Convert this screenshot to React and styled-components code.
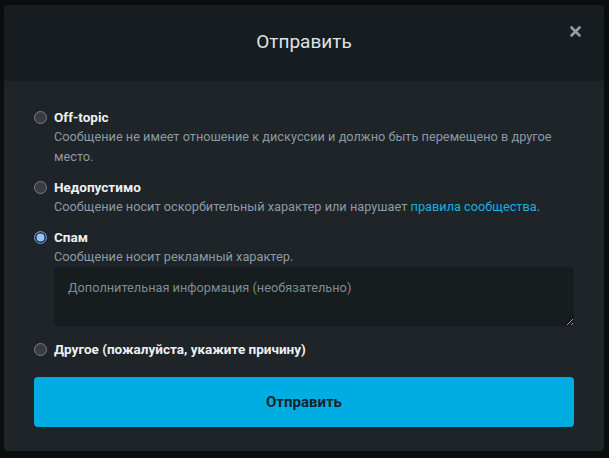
import styled, { createGlobalStyle } from 'styled-components'

const GlobalStyle = createGlobalStyle`
    html, body {
        margin: 0;
        padding: 0;
        background: #0a0e0f;
        height: 100%;
    }
    body {
        font-family: Roboto, "Noto Sans", sans-serif;
    }
`

const reasons = [
    {
        id: 'offtopic',
        title: 'Off-topic',
        text: 'Сообщение не имеет отношение к дискуссии и должно быть перемещено в другое место.',
    },
    {
        id: 'bad',
        title: 'Недопустимо',
        text: 'Сообщение носит оскорбительный характер или нарушает ',
        link: 'правила сообщества',
    },
    {
        id: 'spam',
        title: 'Спам',
        text: 'Сообщение носит рекламный характер.',
        checked: true,
        extra: true,
    },
    {
        id: 'other',
        title: 'Другое (пожалуйста, укажите причину)',
    },
]

export default function App() {
    return (
        <>
            <GlobalStyle />
            <Overlay>
                <Modal>
                    <Header>
                        <Title>Отправить</Title>
                        <Close aria-label="close">
                            <svg width="11" height="11" viewBox="0 0 11 11">
                                <path d="M1.5 1.5 L9.5 9.5 M9.5 1.5 L1.5 9.5" stroke="#8aa1ad" strokeWidth="2.6" strokeLinecap="round" />
                            </svg>
                        </Close>
                    </Header>
                    <Body>
                        <List>
                            {reasons.map(r => (
                                <Item key={r.id}>
                                    <Radio checked={r.checked} />
                                    <Content>
                                        <Label>{r.title}</Label>
                                        {r.text && (
                                            <Desc>
                                                {r.text}
                                                {r.link && <><Link>{r.link}</Link>.</>}
                                            </Desc>
                                        )}
                                        {r.extra && (
                                            <Textarea placeholder="Дополнительная информация (необязательно)" />
                                        )}
                                    </Content>
                                </Item>
                            ))}
                        </List>
                        <Submit>Отправить</Submit>
                    </Body>
                </Modal>
            </Overlay>
        </>
    )
}

const Overlay = styled.div`
    padding: 5px 5px 7px 4px;
`

const Modal = styled.div`
    width: 600px;
    border-radius: 4px;
    overflow: hidden;
    background: #1e2428;
`

const Header = styled.div`
    position: relative;
    height: 76px;
    background: #161c1f;
    display: flex;
    align-items: center;
    justify-content: center;
`

const Title = styled.h2`
    margin: 0 0 4px;
    font-size: 19px;
    font-weight: 400;
    color: #dfe3e5;
`

const Close = styled.button`
    position: absolute;
    top: 21px;
    right: 23px;
    padding: 0;
    border: 0;
    background: none;
    display: flex;
`

const Body = styled.div`
    padding: 26px 30px 24px;
`

const List = styled.div`
    display: flex;
    flex-direction: column;
    gap: 10px;
`

const Item = styled.div`
    display: flex;
    gap: 7px;
    &:last-child {
        margin-top: 3px;
    }
`

const Radio = styled.span`
    flex: none;
    box-sizing: border-box;
    width: 13px;
    height: 13px;
    margin-top: 4px;
    border-radius: 50%;
    border: 1px solid ${({ checked }) => (checked ? '#5d8fd3' : '#7a7f82')};
    background: ${({ checked }) => (checked ? '#99c3f7' : '#393d40')};
    box-shadow: ${({ checked }) => (checked ? 'inset 0 0 0 1.5px #1e2428' : 'none')};
`

const Content = styled.div`
    flex: 1;
    display: flex;
    flex-direction: column;
`

const Label = styled.div`
    font-size: 13.5px;
    line-height: 20px;
    font-weight: 700;
    color: #eef0f1;
`

const Desc = styled.div`
    font-size: 12.75px;
    line-height: 20px;
    color: #8a9ba3;
`

const Link = styled.a`
    color: #1aaee0;
`

const Textarea = styled.textarea`
    box-sizing: border-box;
    margin-top: 0;
    height: 59px;
    padding: 11px 14px;
    border: 0;
    border-radius: 4px;
    background: #171c1f;
    color: #c9d2d6;
    font-family: Roboto, "Noto Sans", sans-serif;
    font-size: 12.75px;
    line-height: 20px;
    outline: none;
    &::placeholder {
        color: #7e8d94;
    }
`

const Submit = styled.button`
    display: block;
    width: 100%;
    height: 50px;
    margin-top: 18px;
    border: 0;
    border-radius: 4px;
    background: #00ade3;
    color: #16242c;
    font-family: Roboto, "Noto Sans", sans-serif;
    font-size: 15px;
    font-weight: 700;
`
